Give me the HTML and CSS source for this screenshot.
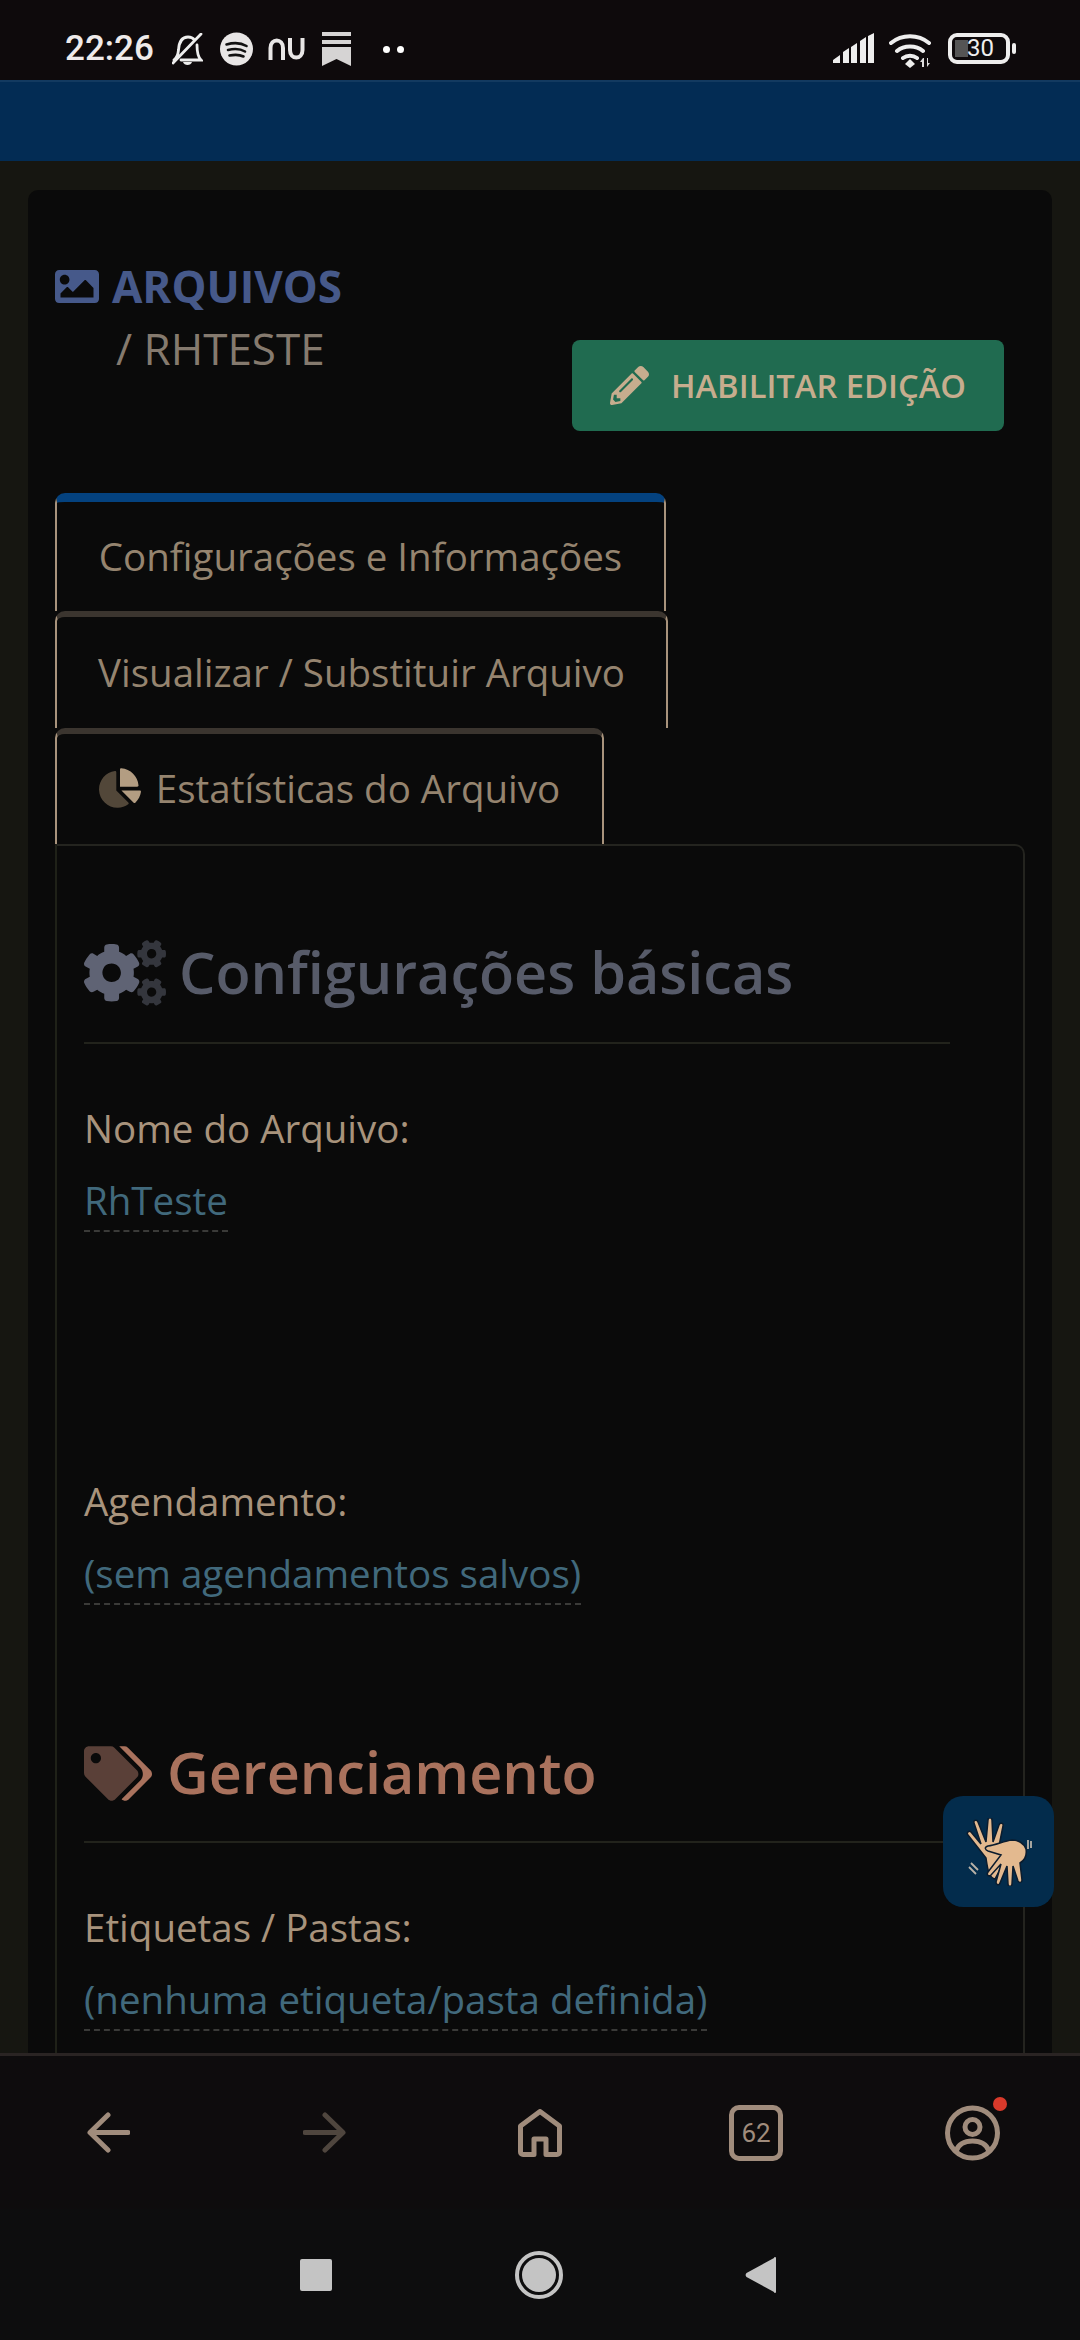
FILE: index.html
```html
<!DOCTYPE html>
<html lang="pt-BR">
<head>
    <meta charset="UTF-8">
    <meta name="viewport" content="width=device-width, initial-scale=1.0">
    <title>Arquivos</title>
    <link rel="stylesheet" href="styles.css">
</head>
<body>
    <div class="status-bar">
        <div class="status-left">
            <span class="clock">22:26</span>
            <svg class="st-bell" width="31" height="33" viewBox="0 0 31 33"><path d="M2 27c3-2 4-5 4.500-10C7 9 10 4 16 4c3 0 5 1 6.500 3M25 12c0 7 1 12 4 15H9M1 30 29 1" fill="none" stroke="#eee" stroke-width="2.800" stroke-linecap="round"/><path d="M11 29h9c-1 4-8 4-9 0z" fill="#eee"/></svg>
            <svg class="st-spotify" width="33" height="34" viewBox="0 0 33 34"><circle cx="16.500" cy="17" r="16.500" fill="#e8e6e6"/><path d="M6.500 12.500c7-2 14-2 20 1.500M8 18c6-1.500 12-1.500 17 1.500M9.500 23.500c5-1 10-1 14 1" fill="none" stroke="#111" stroke-width="2.600" stroke-linecap="round"/></svg>
            <svg class="st-nu" width="37" height="22" viewBox="0 0 37 22"><path d="M2.500 22V10C2.500 0 15 0 15 10v12M22 0v12c0 10 12.500 10 12.500 0V0" fill="none" stroke="#e8e6e6" stroke-width="4"/></svg>
            <svg class="st-book" width="29" height="34" viewBox="0 0 29 34"><path d="M0 0h29v4H0zM0 8h29v4H0zM0 15h29v19l-14.500-7L0 34z" fill="#d6d4d4"/></svg>
            <span class="st-dots"><i></i><i></i></span>
        </div>
        <div class="status-right">
            <svg class="st-signal" width="41" height="30" viewBox="0 0 41 30"><path d="M0 30v-3l7-5v8zM10 30V19l6-4v15zM18 30V14l6-4v20zM27 30V8l6-4v26zM35 30V3l6-3v30z" fill="#eee"/></svg>
            <svg class="st-wifi" width="44" height="38" viewBox="0 0 44 38"><path d="M2 10c11-9 27-9 38 0M8 18c7-6 19-6 26 0M14 25c4-3 10-3 14 0" fill="none" stroke="#eee" stroke-width="4" stroke-linecap="round"/><path d="M21 26l5 5-5 4-5-4z" fill="#eee"/><path d="M34 25l-3 4h2v5h2v-9zM38 25v9l3-4h-2v-5z" fill="#ddd"/></svg>
            <div class="battery"><span class="battery-fill"></span><span class="battery-num">30</span></div>
            <span class="battery-tip"></span>
        </div>
    </div>
    <div class="top-band"></div>

    <main class="page">
        <section class="card">
            <div class="page-head">
                <div class="head-title">
                    <h2 class="arquivos">
                        <svg width="44" height="33" viewBox="0 64 512 384"><path fill="#46598a" d="M464 448H48c-26.510 0-48-21.490-48-48V112c0-26.510 21.490-48 48-48h416c26.510 0 48 21.490 48 48v288c0 26.510-21.490 48-48 48zM112 120c-30.928 0-56 25.072-56 56s25.072 56 56 56 56-25.072 56-56-25.072-56-56-56zM64 384h384V272l-87.515-87.515c-4.686-4.686-12.284-4.686-16.971 0L208 320l-55.515-55.515c-4.686-4.686-12.284-4.686-16.971 0L64 336v48z"/></svg>
                        ARQUIVOS
                    </h2>
                    <div class="crumb">/ RHTESTE</div>
                </div>
                <button class="btn-edit">
                    <svg width="39" height="39" viewBox="0 0 512 512"><path fill="#c6ad8e" d="M497.900 142.100l-46.100 46.100c-4.700 4.700-12.300 4.700-17 0l-111-111c-4.700-4.700-4.700-12.300 0-17l46.100-46.100c18.700-18.700 49.100-18.700 67.900 0l60.100 60.100c18.800 18.700 18.800 49.100 0 67.900zM284.200 99.800L21.600 362.400.4 483.900c-2.900 16.400 11.400 30.600 27.800 27.800l121.500-21.300 262.600-262.600c4.700-4.700 4.700-12.300 0-17l-111-111c-4.800-4.700-12.400-4.700-17.100 0zM124.100 339.900c-5.500-5.500-5.500-14.300 0-19.800l154-154c5.500-5.500 14.300-5.500 19.800 0s5.500 14.300 0 19.800l-154 154c-5.500 5.500-14.300 5.500-19.800 0zM88 424h48v36.300l-64.500 11.300-31.100-31.100L51.700 376H88v48z"/></svg>
                    HABILITAR EDIÇÃO
                </button>
            </div>

            <div class="tabs">
                <a class="tab tab-active">Configurações e Informações</a>
                <a class="tab tab-wide">Visualizar / Substituir Arquivo</a>
                <a class="tab tab-short">
                    <svg width="42" height="40" viewBox="0 0 544 512"><path fill="#b39d82" d="M527.790 288H290.500l158.030 158.030c6.040 6.040 15.980 6.530 22.190.68 38.700-36.460 65.320-85.610 73.130-140.860 1.340-9.460-6.490-17.850-16.060-17.850zm-15.830-64.800C503.720 103.740 408.260 8.280 288.800.04 279.680-.59 272 7.100 272 16.240V240h223.770c9.140 0 16.820-7.680 16.190-16.800z"/><path fill="#524739" d="M224 288V50.710c0-9.550-8.390-17.400-17.840-16.060C86.990 51.490-4.100 155.600.14 280.370 4.500 408.510 114.830 513.590 243.030 511.980c50.400-.63 96.970-16.870 135.260-44.030 7.900-5.600 8.420-17.230 1.570-24.080L224 288z"/></svg>
                    Estatísticas do Arquivo
                </a>
            </div>

            <div class="tab-panel">
                <h3 class="sec-title sec-basic">
                    <svg width="82" height="66" viewBox="0 0 640 512"><path fill="#5f6374" d="M386.300 286.100l33.700 16.800c10.100 5.800 14.500 18.100 10.500 29.100-8.900 24.200-26.400 46.400-42.600 65.800-7.400 8.900-20.200 11.100-30.300 5.300l-29.100-16.800c-16 13.700-34.600 24.600-54.900 31.700v33.600c0 11.600-8.300 21.600-19.700 23.600-24.600 4.200-50.400 4.400-75.900 0-11.500-2-20-11.900-20-23.600V418c-20.300-7.200-38.900-18-54.900-31.700L74 403c-10 5.800-22.900 3.600-30.300-5.300-16.200-19.400-33.300-41.600-42.200-65.700-4-10.900.4-23.200 10.500-29.100l33.300-16.800c-3.900-20.900-3.900-42.400 0-63.400L12 205.800c-10.100-5.800-14.600-18.100-10.500-29 8.900-24.200 26-46.400 42.200-65.800 7.400-8.900 20.200-11.100 30.300-5.300l29.100 16.800c16-13.700 34.600-24.600 54.900-31.700V57.100c0-11.500 8.200-21.500 19.600-23.500 24.600-4.200 50.500-4.400 76-.1 11.500 2 20 11.900 20 23.600v33.600c20.300 7.200 38.900 18 54.900 31.700l29.100-16.800c10-5.800 22.900-3.600 30.300 5.300 16.200 19.400 33.200 41.600 42.100 65.800 4 10.900.1 23.200-10 29.100l-33.700 16.800c3.900 21 3.900 42.500 0 63.500zm-117.600 21.100c59.200-77-28.700-164.900-105.700-105.700-59.200 77 28.700 164.900 105.700 105.700z"/><path fill="#34363d" d="M512.100 191l-8.200 14.300c-3 5.300-9.400 7.500-15.100 5.400-11.800-4.400-22.600-10.700-32.100-18.600-4.600-3.800-5.800-10.500-2.800-15.700l8.200-14.300c-6.900-8-12.300-17.300-15.900-27.400h-16.500c-6 0-11.200-4.300-12.200-10.300-2-12-2.100-24.600 0-37.100 1-6 6.200-10.400 12.200-10.400h16.500c3.600-10.100 9-19.400 15.900-27.400l-8.200-14.300c-3-5.200-1.900-11.900 2.800-15.700 9.500-7.900 20.400-14.200 32.100-18.600 5.700-2.100 12.100.1 15.100 5.400l8.200 14.300c10.500-1.900 21.200-1.900 31.700 0L552 6.300c3-5.300 9.400-7.500 15.100-5.400 11.800 4.400 22.600 10.700 32.100 18.600 4.600 3.800 5.800 10.500 2.800 15.700l-8.200 14.300c6.900 8 12.300 17.300 15.900 27.400h16.500c6 0 11.200 4.300 12.200 10.300 2 12 2.100 24.600 0 37.100-1 6-6.200 10.400-12.200 10.400h-16.500c-3.600 10.100-9 19.400-15.900 27.400l8.200 14.300c3 5.200 1.900 11.900-2.800 15.700-9.500 7.900-20.400 14.200-32.100 18.600-5.700 2.100-12.100-.1-15.100-5.400l-8.200-14.300c-10.400 1.900-21.200 1.900-31.700 0zm-10.500-58.800c38.500 29.600 82.400-14.300 52.800-52.800-38.500-29.700-82.400 14.300-52.800 52.800zM512.100 489.900l-8.200 14.300c-3 5.300-9.400 7.500-15.100 5.400-11.800-4.400-22.600-10.700-32.100-18.600-4.600-3.800-5.800-10.500-2.800-15.700l8.200-14.300c-6.900-8-12.300-17.300-15.900-27.400h-16.500c-6 0-11.200-4.300-12.200-10.300-2-12-2.100-24.600 0-37.100 1-6 6.200-10.400 12.200-10.400h16.500c3.600-10.100 9-19.400 15.900-27.400l-8.200-14.300c-3-5.200-1.900-11.900 2.800-15.700 9.500-7.900 20.400-14.200 32.100-18.600 5.700-2.100 12.100.1 15.100 5.400l8.200 14.300c10.500-1.900 21.200-1.900 31.700 0l8.200-14.300c3-5.300 9.400-7.500 15.100-5.400 11.800 4.400 22.600 10.700 32.100 18.600 4.600 3.800 5.800 10.500 2.800 15.700l-8.200 14.300c6.900 8 12.300 17.300 15.900 27.400h16.500c6 0 11.200 4.300 12.200 10.300 2 12 2.100 24.600 0 37.100-1 6-6.200 10.400-12.200 10.400h-16.500c-3.600 10.100-9 19.400-15.900 27.400l8.200 14.300c3 5.200 1.900 11.900-2.800 15.700-9.500 7.900-20.400 14.200-32.100 18.600-5.700 2.100-12.100-.1-15.100-5.400l-8.200-14.300c-10.400 1.900-21.200 1.900-31.700 0zM501.600 431c38.500 29.600 82.400-14.300 52.800-52.800-38.500-29.600-82.400 14.300-52.800 52.800z"/></svg>
                    Configurações básicas
                </h3>
                <div class="field">
                    <label>Nome do Arquivo:</label>
                    <a class="editable">RhTeste</a>
                </div>
                <div class="field field-gap">
                    <label>Agendamento:</label>
                    <a class="editable">(sem agendamentos salvos)</a>
                </div>
                <h3 class="sec-title sec-manage">
                    <svg width="68" height="55" viewBox="0 0 640 512"><path fill="#5a4038" d="M497.941 225.941L286.059 14.059A48 48 0 0 0 252.118 0H48C21.490 0 0 21.490 0 48v204.118a48 48 0 0 0 14.059 33.941l211.882 211.882c18.744 18.745 49.136 18.746 67.882 0l204.118-204.118c18.745-18.745 18.745-49.137 0-67.882zM112 160c-26.510 0-48-21.490-48-48s21.490-48 48-48 48 21.490 48 48-21.490 48-48 48z"/><path fill="#a9725d" d="M625.941 293.823L421.823 497.941c-18.745 18.745-49.137 18.745-67.882 0l-.36-.36L527.640 323.522c16.999-16.999 26.360-39.600 26.360-63.640s-9.362-46.641-26.360-63.640L331.397 0h48.721a48 48 0 0 1 33.941 14.059l211.882 211.882c18.745 18.745 18.745 49.137 0 67.882z"/></svg>
                    Gerenciamento
                </h3>
                <div class="field">
                    <label>Etiquetas / Pastas:</label>
                    <a class="editable">(nenhuma etiqueta/pasta definida)</a>
                </div>
            </div>
        </section>
    </main>

    <button class="libras">
        <svg width="66" height="68" viewBox="0 0 66 68" fill="#e3b98f" stroke="#0b1c2e" stroke-width="1.500">
            <path d="M20 40 2 17c-2-2 1-5 3-3l10 12L8 5c-1-3 3-4 4-1l8 20L22 2c0-3 4-3 4 0l1 22 6-17c1-3 5-2 4 1l-4 20 6 14-10 19c-5-1-7-6-9-21z"/>
            <path d="M22 28c8-1 16-5 24-6 6 0 12 3 14 9 1 6-1 11-6 14l2 17c0 3-3 3-4 1l-5-15-1 18c0 3-4 3-4 0l-1-18-7 17c-1 3-4 2-4-1l5-18-10 11c-2 2-5 0-3-3l13-17-13-4c-3-1-4-4 0-5z"/>
            <path d="M5 45l7 7M3 49l7 7M62 22v9M65 23v7" fill="none" stroke="#b9b2a8" stroke-width="1.800"/>
        </svg>
    </button>

    <div class="browser-bar">
        <svg width="43" height="41" viewBox="0 0 43 41"><path d="M21 3 3 20.500 21 38M5 20.500h36" fill="none" stroke="#a08c7c" stroke-width="5" stroke-linecap="round" stroke-linejoin="round"/></svg>
        <svg width="43" height="41" viewBox="0 0 43 41"><path d="M22 3l18 17.500L22 38M38 20.500H2" fill="none" stroke="#4f463e" stroke-width="5" stroke-linecap="round" stroke-linejoin="round"/></svg>
        <svg width="44" height="48" viewBox="0 0 44 48"><path d="M2.500 17 22 2.500 41.500 17v26a2.500 2.500 0 0 1-2.500 2.500H28V30H16v15.500H5A2.500 2.500 0 0 1 2.500 43z" fill="none" stroke="#a08c7c" stroke-width="5" stroke-linejoin="round"/></svg>
        <div class="tab-count">62</div>
        <div class="profile">
            <svg width="55" height="56" viewBox="0 0 55 56"><circle cx="27.500" cy="28" r="25" fill="none" stroke="#a08c7c" stroke-width="5"/><circle cx="27.500" cy="22" r="7.500" fill="none" stroke="#a08c7c" stroke-width="5"/><path d="M11 46c3-8 9-10 16.500-10S41 38 44 46" fill="none" stroke="#a08c7c" stroke-width="5"/></svg>
            <span class="dot-red"></span>
        </div>
    </div>

    <div class="nav-bar">
        <span class="nav-square"></span>
        <span class="nav-circle"><i></i></span>
        <svg width="31" height="36" viewBox="0 0 31 36"><path d="M31 1v34a1 1 0 0 1-2 0L1.500 20a3 3 0 0 1 0-4L29 1a1 1 0 0 1 2 0z" fill="#c4c4c4"/></svg>
    </div>
</body>
</html>
```

FILE: styles.css
```css
* {
    box-sizing: border-box;
}

html, body {
    margin: 0;
    padding: 0;
}

body {
    width: 1080px;
    height: 2340px;
    overflow: hidden;
    background-color: #0e0c0d;
    font-family: "Open Sans", sans-serif;
    display: flex;
    flex-direction: column;
    position: relative;
}

/* status bar */
.status-bar {
    height: 80px;
    flex: none;
    padding: 30px 0 0 65px;
    display: flex;
    justify-content: space-between;
    background-color: #0e0a0c;
}

.status-left {
    display: flex;
    align-items: center;
    height: 38px;
}

.clock {
    font-family: Roboto, sans-serif;
    font-weight: 500;
    font-size: 35px;
    line-height: 38px;
    width: 107px;
    color: #eeeaea;
}

.st-bell {
    margin-right: 17px;
}

.st-spotify {
    margin-right: 15px;
}

.st-nu {
    margin-right: 17px;
}

.st-dots {
    display: flex;
    gap: 7px;
    margin-left: 32px;
}

.st-dots i {
    width: 7px;
    height: 7px;
    border-radius: 50%;
    background-color: #fff;
}

.status-right {
    display: flex;
    align-items: flex-start;
    padding: 3px 64px 0 0;
}

.st-signal {
    margin-right: 15px;
}

.st-wifi {
    margin-right: 15px;
}

.battery {
    width: 62px;
    height: 31px;
    border: 4px solid #eee;
    border-radius: 9px;
    position: relative;
}

.battery-fill {
    position: absolute;
    left: 3px;
    top: 3px;
    bottom: 3px;
    width: 13px;
    background-color: #555;
}

.battery-num {
    position: absolute;
    left: 15px;
    top: -3px;
    font-family: Roboto, sans-serif;
    font-size: 24px;
    line-height: 29px;
    color: #eee;
}

.battery-tip {
    width: 4px;
    height: 11px;
    border-radius: 2px;
    background-color: #eee;
    margin: 10px 0 0 2px;
}

.top-band {
    height: 81px;
    flex: none;
    background-color: #032c54;
    border-top: 2px solid #133a60;
}

/* page */
.page {
    flex: 1;
    min-height: 0;
    overflow: hidden;
    padding: 29px 28px 0 28px;
    background-color: #161611;
    border-bottom: 3px solid #2a2423;
}

.card {
    background-color: #0a0a0a;
    border-radius: 10px 10px 0 0;
    padding: 0 28px 0 27px;
    height: 100%;
}

.page-head {
    height: 303px;
    display: flex;
    justify-content: space-between;
    align-items: flex-start;
}

.head-title {
    padding-top: 71px;
}

.arquivos {
    margin: 0;
    display: flex;
    align-items: center;
    gap: 13px;
    font-size: 44px;
    line-height: 50px;
    font-weight: 700;
    color: #46598a;
}

.crumb {
    margin: 12px 0 0 61px;
    font-size: 44px;
    line-height: 50px;
    color: #857a6e;
}

.btn-edit {
    margin: 150px 20px 0 0;
    width: 432px;
    height: 91px;
    border: none;
    border-radius: 8px;
    background-color: #206b50;
    color: #c6ad8e;
    font-family: "Open Sans", sans-serif;
    font-weight: 600;
    font-size: 32.700px;
    display: flex;
    align-items: center;
    justify-content: center;
    gap: 22px;
    padding: 0;
}

/* tabs */
.tabs {
    display: flex;
    flex-direction: column;
    align-items: flex-start;
}

.tab {
    display: flex;
    align-items: center;
    justify-content: center;
    gap: 15px;
    height: 117px;
    width: 611px;
    padding-bottom: 2px;
    background-color: #0a0a0a;
    border-left: 2px solid #a8937c;
    border-right: 2px solid #a8937c;
    border-top: 6px solid #3b352f;
    border-radius: 10px 10px 0 0;
    font-size: 38.500px;
    color: #95846f;
}

.tab-active {
    border-top: 9px solid #04427f;
    height: 118px;
}

.tab-wide {
    width: 613px;
}

.tab-short {
    width: 549px;
    height: 116px;
}

.tab-panel {
    border-left: 2px solid #1f2118;
    border-right: 2px solid #24241f;
    border-top: 2px solid #24241f;
    border-radius: 0 10px 0 0;
    width: 970px;
    min-height: 1300px;
    padding: 0 27px;
}

.sec-title {
    margin: 0;
    display: flex;
    align-items: flex-end;
    width: 866px;
    border-bottom: 2px solid #22231c;
    font-weight: 600;
    font-size: 57.500px;
    line-height: 80px;
}

.sec-title svg {
    flex: none;
    align-self: center;
}

.sec-basic {
    height: 198px;
    padding: 87px 0 30px;
    gap: 13px;
    color: #575b69;
}

.sec-manage {
    height: 238px;
    padding: 129px 0 29px;
    gap: 15px;
    color: #a9725d;
}

.field {
    padding-top: 59px;
    font-size: 38.500px;
}

.field label {
    display: block;
    line-height: 50px;
    color: #a8937c;
}

.field-gap {
    padding-top: 244px;
}

.editable {
    display: inline-block;
    margin-top: 22px;
    line-height: 50px;
    padding-bottom: 5px;
    color: #41697c;
    border-bottom: 2px dashed #3a3a38;
}

/* libras widget */
.libras {
    position: absolute;
    left: 943px;
    top: 1796px;
    width: 111px;
    height: 111px;
    border: none;
    border-radius: 20px;
    background-color: #032c4c;
    display: flex;
    align-items: center;
    justify-content: center;
    padding: 0;
}

/* browser bottom bar */
.browser-bar {
    height: 153px;
    flex: none;
    background-color: #0e0c0d;
    display: grid;
    grid-template-columns: repeat(5, 216px);
    justify-items: center;
    align-items: center;
}

.tab-count {
    width: 54px;
    height: 56px;
    border: 5px solid #a08c7c;
    border-radius: 10px;
    display: flex;
    align-items: center;
    justify-content: center;
    font-family: Roboto, sans-serif;
    font-size: 26px;
    color: #a08c7c;
}

.profile {
    position: relative;
    display: flex;
}

.dot-red {
    position: absolute;
    right: -7px;
    top: -8px;
    width: 14px;
    height: 14px;
    border-radius: 50%;
    background-color: #d93a2b;
}

/* android nav */
.nav-bar {
    height: 131px;
    flex: none;
    background-color: #0d0d0e;
    display: flex;
    align-items: center;
    justify-content: center;
    padding: 1px 4px 0 0;
}

.nav-square {
    width: 32px;
    height: 32px;
    border-radius: 2px;
    background-color: #c4c4c4;
}

.nav-circle {
    width: 48px;
    height: 48px;
    margin: 0 182px 0 183px;
    border: 4px solid #c4c4c4;
    border-radius: 50%;
    display: flex;
    align-items: center;
    justify-content: center;
}

.nav-circle i {
    width: 34px;
    height: 34px;
    border-radius: 50%;
    background-color: #c4c4c4;
}
```
